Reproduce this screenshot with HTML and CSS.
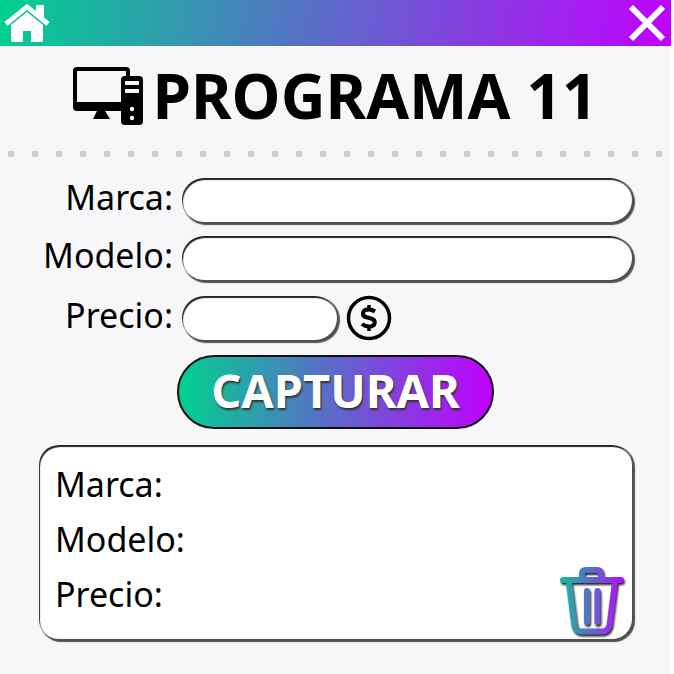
FILE: index.html
```html
<!DOCTYPE html>
<html lang="es">
<head>
<meta charset="utf-8">
<meta name="viewport" content="width=device-width, initial-scale=1">
<title>Programa 11</title>
<link rel="stylesheet" href="styles.css">
</head>
<body>
<div class="window">
  <header class="bar">
    <a class="bar-action" href="#" aria-label="Inicio">
      <svg width="46" height="38" viewBox="0 0 46 38" fill="#fff">
        <path d="M33 1h6q1 0 1 1v14l-8-7V2q0-1 1-1z"/>
        <path d="M2 20 23 3 44 20" fill="none" stroke="#fff" stroke-width="5"/>
        <path d="M7 20 23 7 39 20v16q0 2-2 2H27V27h-8v11H9q-2 0-2-2z"/>
        <path d="M4 22.500 23 7 42 22.500" fill="none" stroke="#0bc596" stroke-width="1.500"/>
      </svg>
    </a>
    <button class="bar-action" type="button" aria-label="Cerrar">
      <svg width="38" height="38" viewBox="0 0 38 38"><path d="M3 3 35 35M35 3 3 35" stroke="#fff" stroke-width="6"/></svg>
    </button>
  </header>

  <div class="heading">
    <svg width="70" height="58" viewBox="0 0 70 58">
      <path fill-rule="evenodd" d="M4 0h49q4 0 4 4v40H4q-4 0-4-4V4Q0 0 4 0zM4 4v31h49V4zM24 44h8l5 8H20z"/>
      <rect x="48" y="9" width="22" height="49" rx="4"/>
      <path fill="#f7f7fa" d="M52 14h14v4H52zM52 22h14v4H52z"/>
      <circle cx="59" cy="42" r="2.200" fill="#f7f7fa"/><circle cx="59" cy="51" r="2.200" fill="#f7f7fa"/>
    </svg>
    <h1>PROGRAMA 11</h1>
  </div>
  <div class="dots"></div>

  <form class="form">
    <label for="marca">Marca:</label>
    <input id="marca" type="text">
    <label for="modelo">Modelo:</label>
    <input id="modelo" type="text">
    <label for="precio">Precio:</label>
    <div class="price">
      <input id="precio" type="text" inputmode="decimal">
      <svg width="46" height="46" viewBox="0 0 46 46" fill="none" stroke="#000">
        <circle cx="23" cy="23" r="20.500" stroke-width="3.500"/>
        <path stroke-width="4" d="M29 16.500Q26 14.500 22.500 14.500C15.500 14.500 15.500 21 20.500 22.300L25 23.500C30.500 25 30 31.500 23 31.500Q19 31.500 16 29"/>
        <path stroke-width="3.500" d="M23 10v5M23 31v5"/>
      </svg>
    </div>
    <button class="capture" type="button">CAPTURAR</button>
  </form>

  <section class="result">
    <dl>
      <dt>Marca:</dt><dd></dd>
      <dt>Modelo:</dt><dd></dd>
      <dt>Precio:</dt><dd></dd>
    </dl>
    <button class="trash" type="button" aria-label="Borrar">
      <svg width="68" height="72" viewBox="0 0 68 72" fill="none" stroke-linecap="round" stroke-linejoin="round">
        <defs>
          <linearGradient id="tint" gradientUnits="userSpaceOnUse" x1="2" y1="0" x2="64" y2="0">
            <stop offset="0" stop-color="#12bd9b"/><stop offset=".5" stop-color="#5f67cb"/><stop offset="1" stop-color="#b80cf8"/>
          </linearGradient>
        </defs>
        <g stroke="url(#tint)">
          <path stroke-width="6" d="M4 14H62M23 13V8Q23 4 27 4H38Q42 4 42 8V13M10 16 15 56Q16 65.500 22 65.500H43Q50 65.500 51 56L56 16"/>
          <path stroke-width="6" d="M28 25 28.010 56M38.500 25 38.510 56"/>
        </g>
      </svg>
    </button>
  </section>
</div>
</body>
</html>
```
FILE: styles.css
```css
* {
  box-sizing: border-box;
}

html {
  background: #fff;
}

body {
  margin: 0 3px 0 0;
  font-family: "Noto Sans", "Open Sans", sans-serif;
  color: #000;
}

button {
  font: inherit;
  cursor: pointer;
}

svg {
  display: block;
  flex: none;
}

.window {
  min-height: 100vh;
  background: #f7f7fa;
}

.bar {
  display: flex;
  align-items: center;
  justify-content: space-between;
  height: 46px;
  padding: 0 5px 0 4px;
  background: linear-gradient(100deg, #00d18f, #5f67cb 50%, #c000ff);
}

.bar-action {
  padding: 0;
  border: 0;
  background: none;
}

.heading {
  display: flex;
  align-items: center;
  justify-content: center;
  gap: 9px;
  height: 100px;
}

h1 {
  margin: 0;
  padding-bottom: 2px;
  font-size: 62px;
  font-weight: 700;
  line-height: 64px;
  white-space: nowrap;
}

.dots {
  height: 6px;
  margin: 5px 8px 21px;
  background: repeating-linear-gradient(90deg, #d0d0d3 0 6px, transparent 6px 24px);
}

.form {
  display: grid;
  grid-template-columns: 134px 1fr;
  grid-template-rows: 44px 44px 47px 74px;
  gap: 14px 9px;
  align-items: center;
  margin: 0 39px;
  font-size: 34px;
  line-height: 44px;
}

.form label {
  justify-self: end;
  height: 44px;
  margin-top: -6px;
}

.form input {
  width: 100%;
  height: 44px;
  padding: 0 18px;
  border: 0;
  border-radius: 22px;
  font: inherit;
  font-size: 28px;
  background: #fff;
  box-shadow: inset 1px 2px 1px #222, 2px 2px 1px 1px #505050;
}

.price {
  display: flex;
  align-items: center;
  gap: 9px;
}

.price input {
  width: 155px;
}

.capture {
  grid-column: 1 / -1;
  justify-self: center;
  width: 317px;
  height: 74px;
  padding: 0 0 4px;
  border: 2px solid #111;
  border-radius: 37px;
  font-size: 47px;
  font-weight: 700;
  line-height: 66px;
  color: #fff;
  text-shadow: 1px 2px 2px #333;
  background: linear-gradient(90deg, #00d18f, #5f67cb 50%, #c000ff);
}

.result {
  display: flex;
  align-items: flex-end;
  justify-content: space-between;
  height: 194px;
  margin: 16px 39px 0;
  padding: 12px 5px 1px 16px;
  border-radius: 20px;
  background: #fff;
  box-shadow: inset 1px 2px 1px #222, 2px 2px 1px 1px #505050;
}

dl {
  display: grid;
  grid-template-columns: auto 1fr;
  grid-auto-rows: 55px;
  align-self: flex-start;
  flex: 1;
  margin: 0;
  font-size: 34px;
  line-height: 54px;
}

dd {
  margin: 0;
}

.trash {
  padding: 0;
  border: 0;
  background: none;
}

.trash svg {
  filter: drop-shadow(1px 2px 1px #222);
}
```
